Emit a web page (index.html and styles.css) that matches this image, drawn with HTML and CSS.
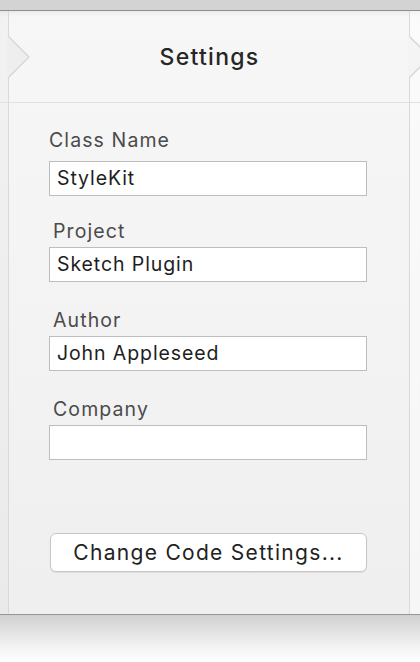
FILE: index.html
```html
<!DOCTYPE html>
<html lang="en">
<head>
<meta charset="utf-8">
<title>Settings</title>
<link rel="stylesheet" href="styles.css">
</head>
<body>
<div class="topbar"></div>
<div class="frame">
  <div class="strip-l head">
    <svg class="notch notch-l" width="24" height="43" viewBox="0 0 24 43">
      <path d="M0 0.5 L1.5 0.5 L22 21 L1.5 41.5 L0 41.5 Z" fill="#eeeeee"/>
      <path d="M1.5 0.5 L22 21 L1.5 41.5" fill="none" stroke="#d5d5d5" stroke-width="1.3"/>
    </svg>
  </div>
  <div class="title">Settings</div>
  <div class="strip-r head">
    <svg class="notch notch-r" width="24" height="43" viewBox="0 0 24 43">
      <path d="M0 0.5 L1.5 0.5 L22 21 L1.5 41.5 L0 41.5 Z" fill="#f4f4f4"/>
      <path d="M1.5 0.5 L22 21 L1.5 41.5" fill="none" stroke="#d5d5d5" stroke-width="1.3"/>
    </svg>
  </div>

  <div class="strip-l"></div>
  <div class="content">
    <div class="field first">
      <div class="label">Class Name</div>
      <div class="input">StyleKit</div>
    </div>
    <div class="field">
      <div class="label">Project</div>
      <div class="input">Sketch Plugin</div>
    </div>
    <div class="field">
      <div class="label">Author</div>
      <div class="input">John Appleseed</div>
    </div>
    <div class="field">
      <div class="label">Company</div>
      <div class="input"></div>
    </div>
    <div class="button">Change Code Settings...</div>
  </div>
  <div class="strip-r"></div>
</div>
<div class="shadow"></div>
</body>
</html>
```

FILE: styles.css
```css
html, body {
  margin: 0;
  padding: 0;
}
body {
  width: 420px;
  height: 662px;
  overflow: hidden;
  background: #ffffff;
  font-family: "Inter", "Noto Sans", "DejaVu Sans", sans-serif;
}
.topbar {
  height: 10px;
  background: #d3d3d3;
  border-bottom: 1px solid #8e8e8e;
}
.frame {
  display: grid;
  grid-template-columns: 9px 400px 11px;
  grid-template-rows: 92px 511px;
  background: linear-gradient(#f7f7f7, #efefef);
  border-bottom: 1px solid #969696;
  box-shadow: inset 0 5px 6px -4px rgba(0, 0, 0, 0.08);
}
.head {
  border-bottom: 1px solid #e1e1e1;
}
.strip-l {
  position: relative;
  background: rgba(0, 0, 0, 0.02);
  border-right: 1px solid #d9d9d9;
}
.strip-r {
  position: relative;
  background: rgba(255, 255, 255, 0.45);
  border-left: 1px solid #d9d9d9;
}
.notch {
  position: absolute;
  top: 25px;
  z-index: 2;
  display: block;
}
.notch-l {
  left: 7px;
}
.notch-r {
  left: -2px;
}
.title {
  display: flex;
  align-items: center;
  justify-content: center;
  border-bottom: 1px solid #e1e1e1;
  font-size: 23px;
  font-weight: 500;
  color: #262626;
  letter-spacing: 1.3px;
  padding: 0 0 0 1px;
}
.content {
  display: flex;
  flex-direction: column;
  padding: 25px 0 0 40px;
}
.field {
  display: flex;
  flex-direction: column;
  margin-top: 26px;
}
.field.first {
  margin-top: 0;
  margin-bottom: -3px;
}
.label {
  font-size: 19.5px;
  line-height: 24px;
  color: #4b4b4b;
  letter-spacing: 1.1px;
  padding-left: 4px;
  margin-bottom: 4px;
}
.first .label {
  padding-left: 0;
  margin-bottom: 9px;
}
.input {
  box-sizing: border-box;
  width: 318px;
  height: 35px;
  background: #ffffff;
  border: 1px solid #bdbdbd;
  padding: 0 7px;
  font-size: 19.5px;
  line-height: 33px;
  letter-spacing: 0.9px;
  color: #1e1e1e;
}
.button {
  box-sizing: border-box;
  width: 317px;
  height: 39px;
  margin: 73px 0 0 1px;
  background: #ffffff;
  border: 1px solid #c6c6c6;
  border-radius: 6px;
  box-shadow: 0 1px 1px rgba(0, 0, 0, 0.08);
  display: flex;
  align-items: center;
  justify-content: center;
  font-size: 21px;
  color: #222222;
  letter-spacing: 1.3px;
}
.shadow {
  height: 47px;
  background: linear-gradient(#d0d0d0, #f4f4f4 70%, #ffffff);
}
```
